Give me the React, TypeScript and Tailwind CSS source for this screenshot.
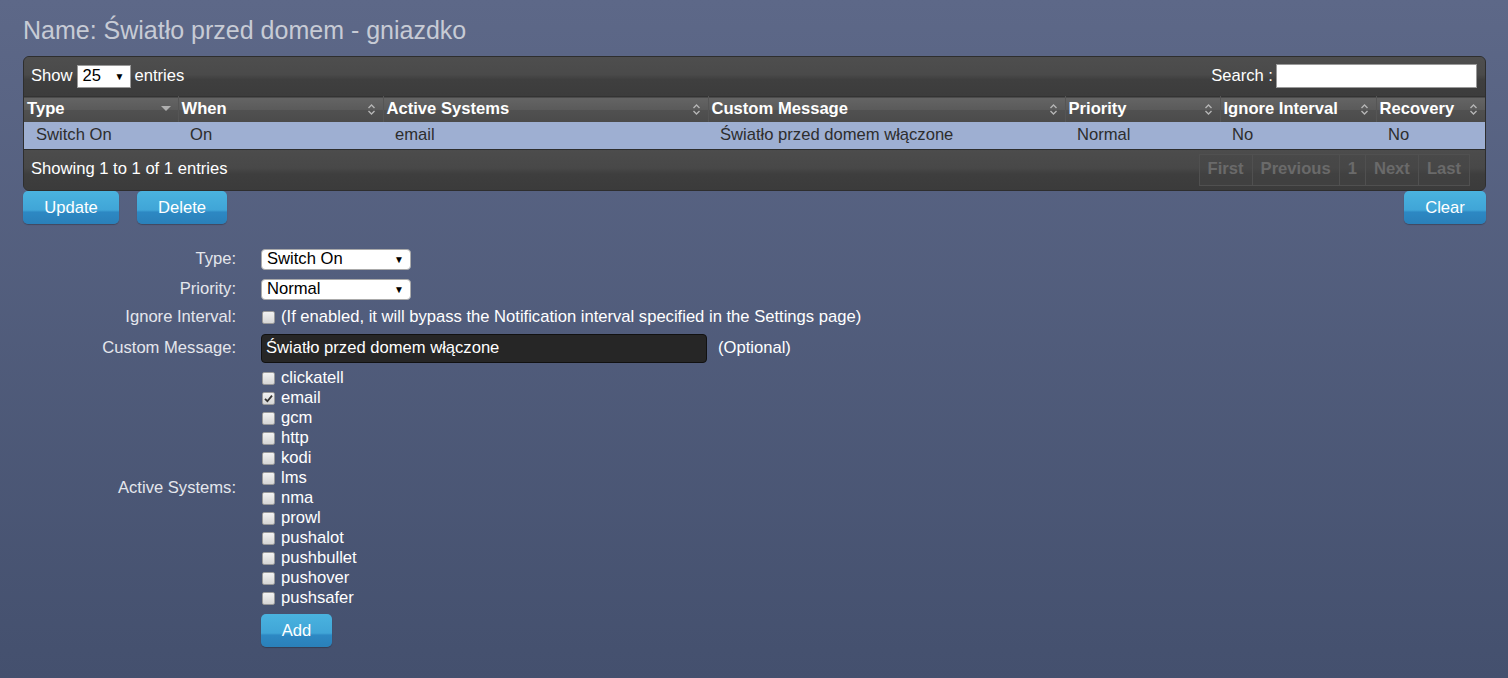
import React from 'react';

const font = { fontFamily: '"Liberation Sans", Arial, sans-serif' };

const columns = [
    { name: 'Type', width: 'w-[154px]', sorted: true },
    { name: 'When', width: 'w-[205px]' },
    { name: 'Active Systems', width: 'w-[325px]' },
    { name: 'Custom Message', width: 'w-[357px]' },
    { name: 'Priority', width: 'w-[155px]' },
    { name: 'Ignore Interval', width: 'w-[156px]' },
    { name: 'Recovery', width: 'w-[109px]' },
];

const row = ['Switch On', 'On', 'email', 'Światło przed domem włączone', 'Normal', 'No', 'No'];

const systems = ['clickatell', 'email', 'gcm', 'http', 'kodi', 'lms', 'nma', 'prowl', 'pushalot', 'pushbullet', 'pushover', 'pushsafer'];

const blueBtn =
    'h-[33px] pt-[2px] rounded-[5px] text-white text-[16.6px] bg-[linear-gradient(to_bottom,#4ab3df_0%,#40a5d7_58%,#2d88c3_64%,#2a80b9_100%)] shadow-[0_1px_1px_rgba(0,0,0,0.25)]';

const SortBoth = () => (
    <svg width="9" height="13" viewBox="0 0 9 13" className="shrink-0">
        <path d="M1.5 5 L4.5 2 L7.5 5" fill="none" stroke="#b5b5b5" strokeWidth="1.4" />
        <path d="M1.5 8 L4.5 11 L7.5 8" fill="none" stroke="#b5b5b5" strokeWidth="1.4" />
    </svg>
);

const SortDesc = () => (
    <svg width="10" height="6" viewBox="0 0 10 6" className="shrink-0">
        <path d="M0 0 L10 0 L5 5 Z" fill="#b0b0b0" />
    </svg>
);

const Check = ({ checked }: { checked?: boolean }) => (
    <span className="w-[13px] h-[13px] rounded-[2px] border border-[#9a9a9a] bg-[linear-gradient(to_bottom,#f2f2f2,#d6d6d6)] flex items-center justify-center shrink-0">
        {checked && (
            <svg width="9" height="9" viewBox="0 0 9 9">
                <path d="M1 4.8 L3.4 7.2 L8 1.6" fill="none" stroke="#333" strokeWidth="1.8" />
            </svg>
        )}
    </span>
);

const Select = ({ value, width }: { value: string; width: string }) => (
    <div className={`${width} h-[21px] bg-white rounded-[4px] border border-[#aaa] flex items-center justify-between pl-[5px] pr-[6px] text-black`}>
        <span>{value}</span>
        <span className="text-[10px]">▼</span>
    </div>
);

export default function App() {
    return (
        <div style={font} className="min-h-[678px] w-full bg-[linear-gradient(to_bottom,#5d6888,#44506e)] px-[23px] pt-[17px] pb-[30px] text-[16.6px]">
            <h1 className="text-[25px] text-[#c7cbd5] leading-[26px]">Name: Światło przed domem - gniazdko</h1>

            {/* Table */}
            <div className="mt-[13px] w-[1463px] rounded-[6px] overflow-hidden border border-[#2e2e2e] bg-[#3c3c3c]">
                <div className="h-[39px] flex items-center justify-between pl-[7px] pr-[8px] bg-[linear-gradient(to_bottom,#4e4e4e_0%,#4a4a4a_45%,#3f3f3f_58%,#3c3c3c_100%)] text-white">
                    <div className="flex items-center gap-[4px]">
                        <span>Show</span>
                        <div className="w-[54px] h-[23px] bg-white border border-[#999] flex items-center justify-between pl-[5px] pr-[5px] text-black">
                            <span>25</span>
                            <span className="text-[10px]">▼</span>
                        </div>
                        <span>entries</span>
                    </div>
                    <div className="flex items-center gap-[3px]">
                        <span>Search :</span>
                        <div className="w-[201px] h-[24px] bg-white border border-[#999]" />
                    </div>
                </div>

                <table className="border-collapse table-fixed w-full">
                    <thead>
                        <tr className="h-[25px] bg-[linear-gradient(to_bottom,#646464_0%,#5a5a5a_50%,#505050_52%,#4b4b4b_100%)] border-t border-[#333]">
                            {columns.map((c, i) => (
                                <th key={c.name} className={`${c.width} p-0 text-left font-bold text-white leading-[24px] ${i > 0 ? 'border-l border-[#555]' : ''}`}>
                                    <div className="flex items-center justify-between pl-[3px] pr-[7px]">
                                        <span>{c.name}</span>
                                        {c.sorted ? <SortDesc /> : <SortBoth />}
                                    </div>
                                </th>
                            ))}
                        </tr>
                    </thead>
                    <tbody>
                        <tr className="h-[27px] bg-[#9eafd2]">
                            {row.map((v, i) => (
                                <td key={i} className="p-0 pl-[12px] text-[#2d2d2d]">{v}</td>
                            ))}
                        </tr>
                    </tbody>
                </table>

                <div className="h-[41px] border-t border-[#2e2e2e] flex items-center justify-between pl-[7px] pr-[15px] bg-[linear-gradient(to_bottom,#4c4c4c_0%,#484848_45%,#3e3e3e_60%,#3b3b3b_100%)] text-white">
                    <span>Showing 1 to 1 of 1 entries</span>
                    <div className="flex h-[32px] text-[#6a6a6a] font-bold">
                        {['First', 'Previous', '1', 'Next', 'Last'].map(p => (
                            <span key={p} className="flex items-center px-[8px] border border-[#505050] -ml-px first:ml-0 bg-[#454545]/40">{p}</span>
                        ))}
                    </div>
                </div>
            </div>

            {/* Action buttons */}
            <div className="flex items-start justify-between w-[1463px]">
                <div className="flex gap-[18px]">
                    <button className={`${blueBtn} w-[96px]`}>Update</button>
                    <button className={`${blueBtn} w-[90px]`}>Delete</button>
                </div>
                <button className={`${blueBtn} w-[82px]`}>Clear</button>
            </div>

            {/* Form */}
            <div className="mt-[21px] -ml-[23px] grid grid-cols-[236px_1fr] gap-x-[25px] text-white">
                <div className="h-[30px] flex items-center justify-end text-[#e4e6ec]">Type:</div>
                <div className="h-[30px] flex items-center"><Select value="Switch On" width="w-[150px]" /></div>

                <div className="h-[30px] flex items-center justify-end text-[#e4e6ec]">Priority:</div>
                <div className="h-[30px] flex items-center"><Select value="Normal" width="w-[150px]" /></div>

                <div className="h-[26px] flex items-center justify-end text-[#e4e6ec]">Ignore Interval:</div>
                <div className="h-[26px] flex items-center gap-[6px] pl-px">
                    <Check />
                    <span>(If enabled, it will bypass the Notification interval specified in the Settings page)</span>
                </div>

                <div className="h-[36px] flex items-center justify-end text-[#e4e6ec]">Custom Message:</div>
                <div className="h-[36px] flex items-center gap-[11px]">
                    <div className="w-[446px] h-[29px] bg-[#262626] rounded-[4px] border border-[#111] flex items-center pl-[4px] text-white">
                        Światło przed domem włączone
                    </div>
                    <span>(Optional)</span>
                </div>

                <div className="flex items-center justify-end text-[#e4e6ec] pt-[2px]">Active Systems:</div>
                <div className="pt-[2px] flex flex-col">
                    {systems.map(s => (
                        <label key={s} className="h-[20px] flex items-center gap-[6px] pl-px">
                            <Check checked={s === 'email'} />
                            <span>{s}</span>
                        </label>
                    ))}
                </div>

                <div />
                <div className="mt-[5px]">
                    <button className={`${blueBtn} w-[71px] h-[32px]`}>Add</button>
                </div>
            </div>
        </div>
    );
}
